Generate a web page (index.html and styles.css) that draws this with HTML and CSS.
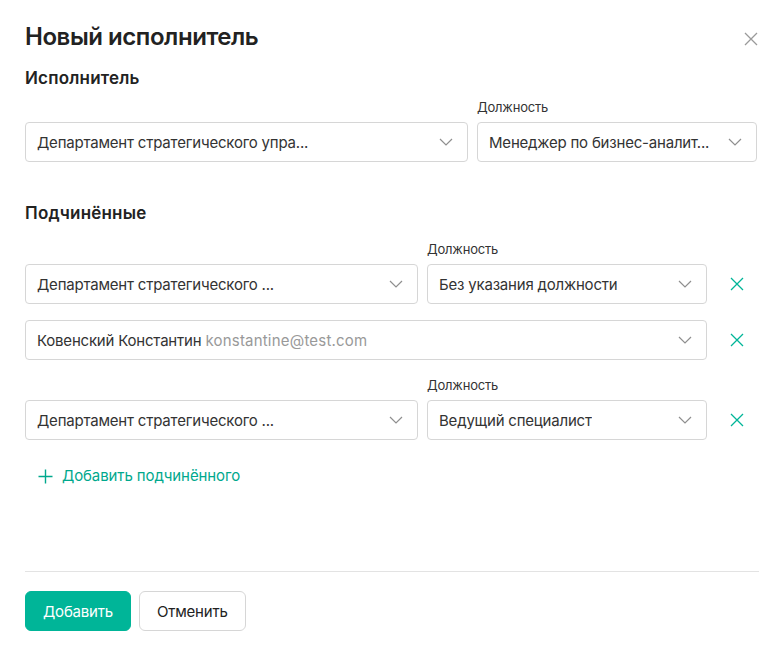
FILE: index.html
```html
<!DOCTYPE html>
<html lang="ru">
<head>
<meta charset="utf-8">
<title>Новый исполнитель</title>
<link rel="stylesheet" href="styles.css">
</head>
<body>
<div class="dialog">
  <div class="content">
    <div class="title-row">
      <h1 class="title">Новый исполнитель</h1>
      <button class="close" aria-label="Закрыть">
        <svg width="14" height="14" viewBox="0 0 14 14"><path d="M1 1L13 13M13 1L1 13" stroke="#9a9a9a" stroke-width="1.3" fill="none"/></svg>
      </button>
    </div>

    <h2 class="section">Исполнитель</h2>
    <div class="row-main">
      <div class="field">
        <div class="select"><span class="val">Департамент стратегического упра...</span><svg class="chev" width="14" height="8" viewBox="0 0 14 8"><path d="M1 1L7 7L13 1" stroke="#8f8f8f" stroke-width="1.2" fill="none"/></svg></div>
      </div>
      <div class="field">
        <div class="label">Должность</div>
        <div class="select"><span class="val">Менеджер по бизнес-аналит...</span><svg class="chev" width="14" height="8" viewBox="0 0 14 8"><path d="M1 1L7 7L13 1" stroke="#8f8f8f" stroke-width="1.2" fill="none"/></svg></div>
      </div>
    </div>

    <h2 class="section sub">Подчинённые</h2>
    <div class="subs">
      <div class="row-sub">
        <div class="field">
          <div class="select"><span class="val">Департамент стратегического ...</span><svg class="chev" width="14" height="8" viewBox="0 0 14 8"><path d="M1 1L7 7L13 1" stroke="#8f8f8f" stroke-width="1.2" fill="none"/></svg></div>
        </div>
        <div class="field">
          <div class="label">Должность</div>
          <div class="select"><span class="val">Без указания должности</span><svg class="chev" width="14" height="8" viewBox="0 0 14 8"><path d="M1 1L7 7L13 1" stroke="#8f8f8f" stroke-width="1.2" fill="none"/></svg></div>
        </div>
        <button class="remove" aria-label="Удалить"><svg width="14" height="14" viewBox="0 0 14 14"><path d="M1 1L13 13M13 1L1 13" stroke="#00b598" stroke-width="1.3" fill="none"/></svg></button>
      </div>

      <div class="row-sub">
        <div class="field wide">
          <div class="select"><span class="val">Ковенский Константин <span class="email">konstantine@test.com</span></span><svg class="chev" width="14" height="8" viewBox="0 0 14 8"><path d="M1 1L7 7L13 1" stroke="#8f8f8f" stroke-width="1.2" fill="none"/></svg></div>
        </div>
        <button class="remove" aria-label="Удалить"><svg width="14" height="14" viewBox="0 0 14 14"><path d="M1 1L13 13M13 1L1 13" stroke="#00b598" stroke-width="1.3" fill="none"/></svg></button>
      </div>

      <div class="row-sub">
        <div class="field">
          <div class="select"><span class="val">Департамент стратегического ...</span><svg class="chev" width="14" height="8" viewBox="0 0 14 8"><path d="M1 1L7 7L13 1" stroke="#8f8f8f" stroke-width="1.2" fill="none"/></svg></div>
        </div>
        <div class="field">
          <div class="label">Должность</div>
          <div class="select"><span class="val">Ведущий специалист</span><svg class="chev" width="14" height="8" viewBox="0 0 14 8"><path d="M1 1L7 7L13 1" stroke="#8f8f8f" stroke-width="1.2" fill="none"/></svg></div>
        </div>
        <button class="remove" aria-label="Удалить"><svg width="14" height="14" viewBox="0 0 14 14"><path d="M1 1L13 13M13 1L1 13" stroke="#00b598" stroke-width="1.3" fill="none"/></svg></button>
      </div>
    </div>

    <button class="add">
      <svg width="15" height="15" viewBox="0 0 15 15"><path d="M7.5 0.5V14.5M0.5 7.5H14.5" stroke="#00a88d" stroke-width="1.4" fill="none"/></svg>
      <span>Добавить подчинённого</span>
    </button>
  </div>

  <div class="footer">
    <button class="btn primary">Добавить</button>
    <button class="btn secondary">Отменить</button>
  </div>
</div>
</body>
</html>
```

FILE: styles.css
```css
* { box-sizing: border-box; }
html, body { margin: 0; padding: 0; background: #fff; }
body {
  font-family: Inter, "Noto Sans", "Liberation Sans", sans-serif;
  color: #333;
  font-size: 15px;
  letter-spacing: -0.2px;
}
button { font-family: inherit; letter-spacing: inherit; }

.dialog {
  min-height: 650px;
  display: flex;
  flex-direction: column;
  padding: 0 23px 0 25px;
}
.content { flex: 1; }

.title-row {
  display: flex;
  justify-content: space-between;
  align-items: flex-start;
  padding-top: 21px;
}
.title {
  margin: 0;
  font-size: 24px;
  line-height: 32px;
  font-weight: 600;
  color: #222;
  letter-spacing: -0.45px;
}
.close {
  border: 0;
  background: none;
  padding: 0;
  margin-top: 11px;
  margin-right: -1px;
  width: 14px;
  height: 14px;
  display: flex;
  cursor: pointer;
}

.section {
  margin: 13px 0 0;
  font-size: 17px;
  line-height: 24px;
  font-weight: 600;
  color: #222;
  letter-spacing: 0.2px;
}
.section.sub { margin-top: 39px; }

.label {
  font-size: 13px;
  line-height: 18px;
  color: #333;
  margin-bottom: 6px;
}

.row-main {
  display: grid;
  grid-template-columns: 1fr 280px;
  gap: 9px;
  align-items: end;
  margin-top: 8px;
}

.subs {
  display: flex;
  flex-direction: column;
  gap: 16px;
  margin-top: 15px;
}
.row-sub {
  display: grid;
  grid-template-columns: 1fr 280px 41px;
  column-gap: 9px;
  align-items: end;
}
.field.wide { grid-column: 1 / 3; }

.select {
  height: 40px;
  border: 1px solid #d6d6d6;
  border-radius: 4px;
  display: flex;
  align-items: center;
  justify-content: space-between;
  padding: 0 14px 0 11px;
  font-size: 15px;
  color: #333;
  background: #fff;
  white-space: nowrap;
}
.val { overflow: hidden; }
.email { color: #999; letter-spacing: 0.2px; }
.chev { flex: none; margin-left: 10px; }

.remove {
  height: 40px;
  border: 0;
  background: none;
  padding: 0;
  display: flex;
  align-items: center;
  justify-content: center;
  cursor: pointer;
}

.add {
  margin-top: 26px;
  margin-left: 13px;
  border: 0;
  background: none;
  padding: 0;
  display: flex;
  align-items: center;
  gap: 9px;
  color: #00a88d;
  font-size: 15px;
  line-height: 20px;
  letter-spacing: -0.1px;
  cursor: pointer;
}

.footer {
  border-top: 1px solid #e3e3e3;
  margin-right: -2px;
  padding: 19px 0 19px;
  display: flex;
  gap: 8px;
}
.btn {
  height: 40px;
  padding: 0 17px;
  border-radius: 6px;
  font-size: 15px;
  cursor: pointer;
}
.primary {
  background: #00b598;
  border: 1px solid #00b598;
  color: #fff;
}
.secondary {
  background: #fff;
  border: 1px solid #d6d6d6;
  color: #222;
}
```
